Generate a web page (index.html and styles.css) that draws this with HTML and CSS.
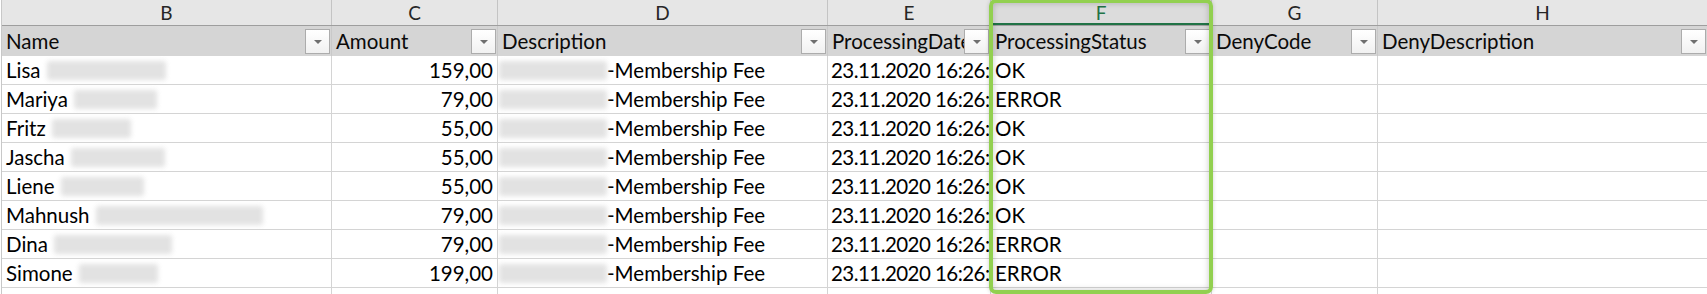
FILE: index.html
```html
<!DOCTYPE html>
<html lang="en">
<head>
<meta charset="utf-8">
<title>Sheet</title>
<link rel="stylesheet" href="styles.css">
</head>
<body>
<div class="sheet">
  <div class="row letters">
    <div class="hcell">B</div>
    <div class="hcell">C</div>
    <div class="hcell">D</div>
    <div class="hcell">E</div>
    <div class="hcell sel">F</div>
    <div class="hcell">G</div>
    <div class="hcell">H</div>
  </div>
  <div class="row filters">
    <div class="fcell"><span class="ft">Name</span><span class="dd"></span></div>
    <div class="fcell"><span class="ft">Amount</span><span class="dd"></span></div>
    <div class="fcell"><span class="ft">Description</span><span class="dd"></span></div>
    <div class="fcell"><span class="ft">ProcessingDate</span><span class="dd"></span></div>
    <div class="fcell"><span class="ft">ProcessingStatus</span><span class="dd"></span></div>
    <div class="fcell"><span class="ft">DenyCode</span><span class="dd"></span></div>
    <div class="fcell"><span class="ft">DenyDescription</span><span class="dd"></span></div>
  </div>

  <div class="row data">
    <div class="cell">Lisa <span class="blob w119"></span></div>
    <div class="cell num">159,00</div>
    <div class="cell"><span class="blob desc"></span>-Membership Fee</div>
    <div class="cell date">23.11.2020 16:26:00</div>
    <div class="cell">OK</div>
    <div class="cell"></div>
    <div class="cell"></div>
  </div>
  <div class="row data">
    <div class="cell">Mariya <span class="blob w83"></span></div>
    <div class="cell num">79,00</div>
    <div class="cell"><span class="blob desc"></span>-Membership Fee</div>
    <div class="cell date">23.11.2020 16:26:00</div>
    <div class="cell">ERROR</div>
    <div class="cell"></div>
    <div class="cell"></div>
  </div>
  <div class="row data">
    <div class="cell">Fritz <span class="blob w79"></span></div>
    <div class="cell num">55,00</div>
    <div class="cell"><span class="blob desc"></span>-Membership Fee</div>
    <div class="cell date">23.11.2020 16:26:00</div>
    <div class="cell">OK</div>
    <div class="cell"></div>
    <div class="cell"></div>
  </div>
  <div class="row data">
    <div class="cell">Jascha <span class="blob w94"></span></div>
    <div class="cell num">55,00</div>
    <div class="cell"><span class="blob desc"></span>-Membership Fee</div>
    <div class="cell date">23.11.2020 16:26:00</div>
    <div class="cell">OK</div>
    <div class="cell"></div>
    <div class="cell"></div>
  </div>
  <div class="row data">
    <div class="cell">Liene <span class="blob w83"></span></div>
    <div class="cell num">55,00</div>
    <div class="cell"><span class="blob desc"></span>-Membership Fee</div>
    <div class="cell date">23.11.2020 16:26:00</div>
    <div class="cell">OK</div>
    <div class="cell"></div>
    <div class="cell"></div>
  </div>
  <div class="row data">
    <div class="cell">Mahnush <span class="blob w167"></span></div>
    <div class="cell num">79,00</div>
    <div class="cell"><span class="blob desc"></span>-Membership Fee</div>
    <div class="cell date">23.11.2020 16:26:00</div>
    <div class="cell">OK</div>
    <div class="cell"></div>
    <div class="cell"></div>
  </div>
  <div class="row data">
    <div class="cell">Dina <span class="blob w118"></span></div>
    <div class="cell num">79,00</div>
    <div class="cell"><span class="blob desc"></span>-Membership Fee</div>
    <div class="cell date">23.11.2020 16:26:00</div>
    <div class="cell">ERROR</div>
    <div class="cell"></div>
    <div class="cell"></div>
  </div>
  <div class="row data">
    <div class="cell">Simone <span class="blob w79"></span></div>
    <div class="cell num">199,00</div>
    <div class="cell"><span class="blob desc"></span>-Membership Fee</div>
    <div class="cell date">23.11.2020 16:26:00</div>
    <div class="cell">ERROR</div>
    <div class="cell"></div>
    <div class="cell"></div>
  </div>
  <div class="row data">
    <div class="cell"></div>
    <div class="cell"></div>
    <div class="cell"></div>
    <div class="cell"></div>
    <div class="cell"></div>
    <div class="cell"></div>
    <div class="cell"></div>
  </div>

  <div class="highlight"></div>
</div>
</body>
</html>
```

FILE: styles.css
```css
html, body {
  margin: 0;
  padding: 0;
  background: #ffffff;
  overflow: hidden;
}

.sheet {
  position: relative;
  margin-left: 1px;
  border-left: 1px solid #c8c8c8;
  width: 1720px;
  height: 294px;
  overflow: hidden;
  font-family: Lato, "Open Sans", sans-serif;
  color: #000;
}

.row {
  display: grid;
  grid-template-columns: 330px 166px 330px 163px 221px 166px 330px;
}

.letters {
  height: 25px;
  background: #e6e6e6;
  border-bottom: 1px solid #9e9e9e;
}

.hcell {
  border-right: 1px solid #c4c4c4;
  text-align: center;
  font-size: 19px;
  line-height: 25px;
  color: #262626;
}

.hcell.sel {
  background: #dcdcdc;
  color: #217346;
  box-shadow: inset 0 -2px 0 #217346;
}

.filters {
  height: 30px;
  background: #d5d5d5;
}

.fcell {
  position: relative;
  overflow: hidden;
  white-space: nowrap;
  border-right: 1px solid #c9c9c9;
  font-size: 20.5px;
  line-height: 30px;
  padding-left: 4px;
  color: #0a0a0a;
}

.dd {
  position: absolute;
  right: 1px;
  top: 3px;
  width: 23px;
  height: 23px;
  border: 1px solid #acacac;
  background: linear-gradient(#ffffff, #f1f1f1);
}

.dd::after {
  content: "";
  position: absolute;
  left: 8px;
  top: 10px;
  border-left: 4px solid transparent;
  border-right: 4px solid transparent;
  border-top: 4px solid #6f6f6f;
}

.data {
  height: 29px;
}

.cell {
  overflow: hidden;
  white-space: nowrap;
  border-right: 1px solid #d4d4d4;
  border-bottom: 1px solid #d4d4d4;
  font-size: 20.5px;
  line-height: 28px;
  padding-left: 4px;
  display: flex;
  align-items: center;
}

.cell.num {
  justify-content: flex-end;
  padding-left: 0;
  padding-right: 4px;
}

.cell.date {
  padding-left: 3px;
  letter-spacing: -0.55px;
}

.blob {
  display: inline-block;
  height: 19px;
  margin-left: 6px;
  background: #d6d6d6;
  border-radius: 3px;
  filter: blur(2.5px);
  opacity: 0.7;
  flex: none;
}

.blob.desc {
  width: 108px;
  margin-left: -3px;
}

.w79 { width: 79px; }
.w83 { width: 83px; }
.w94 { width: 94px; }
.w118 { width: 118px; }
.w119 { width: 119px; }
.w167 { width: 167px; }

.highlight {
  position: absolute;
  left: 987px;
  top: -1px;
  width: 216px;
  height: 287px;
  border: 4px solid #92d050;
  border-radius: 7px;
  box-shadow: inset 0 0 6px rgba(0, 0, 0, 0.22), 0 0 4px rgba(0, 0, 0, 0.18);
  pointer-events: none;
}
```
